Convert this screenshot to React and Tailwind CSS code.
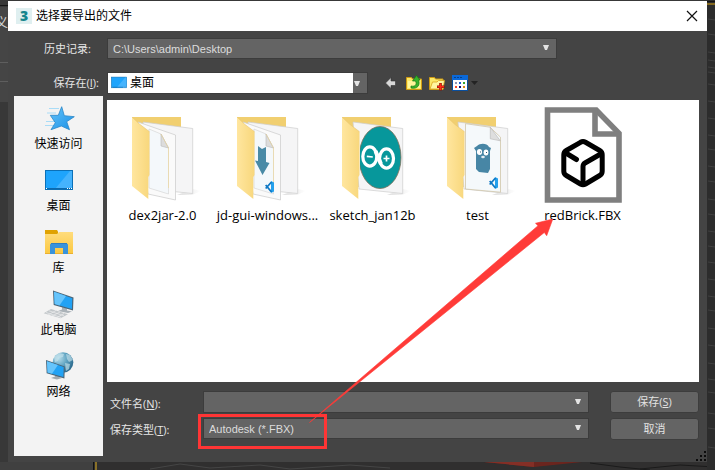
import React from "react";

const FONT = "font-['Open_Sans','Noto_Sans_CJK_SC',sans-serif]";

function Caret({ className = "" }) {
  return (
    <svg viewBox="0 0 6 5" className={"pointer-events-none h-[5px] w-1.5 " + className} aria-hidden="true">
      <path d="M0 0h6L4 5H2z" fill="#e4e4e4" />
    </svg>
  );
}

function Backdrop() {
  const marks = [19, 34, 52, 60, 67, 72, 84, 101, 118, 135, 149, 166, 181, 199, 214, 231, 246, 262, 279, 296, 310, 328, 345, 363, 379, 392, 413, 428, 447];
  return (
    <svg className="absolute inset-0 h-full w-full" viewBox="0 0 715 470" preserveAspectRatio="none" aria-hidden="true">
      <rect width="715" height="470" fill="#383838" />
      <rect y="7" width="8" height="95" fill="#454545" />
      <path d="M0 62.500h8M0 81.500h8" stroke="#5e5e5e" />
      <path d="M0 5.500h8" stroke="#161616" />
      <text x="-5" y="27" fontSize="13" fill="#d5d5d5" fontFamily="Noto Sans CJK SC">义</text>
      <rect y="462" width="93" height="8" fill="#404040" />
      <rect x="93" y="462" width="622" height="8" fill="#302f2f" />
      <path d="M93.500 462v8" stroke="#111" />
      <path d="M96 462v8" stroke="#8a7128" strokeWidth="2" />
      <path d="M150 469l30-5 30 4 50-3 30 4 60-4 40 3" stroke="#454545" fill="none" />
      <path d="M590 463l30 4 30 3M640 469l40-4 35 2" stroke="#1b1b1b" fill="none" />
      <path d="M484 462h98l-48 5z" fill="#6b251e" />
      <path d="M484 462h50v5z" fill="#842f26" />
      <rect x="707" width="8" height="470" fill="#2c2c2c" />
      <path d="M707 1.500h8" stroke="#111" />
      <path d="M707 4h8" stroke="#83681f" strokeWidth="2" />
      {marks.map((y) => (
        <path key={y} d={`M708 ${y}l7 1`} stroke="#414141" />
      ))}
    </svg>
  );
}

function StarIcon() {
  return (
    <svg viewBox="0 0 32 32" className="size-8" aria-hidden="true">
      <defs>
        <linearGradient id="star" x1="0" y1="0" x2="1" y2="1">
          <stop offset="0" stopColor="#62c3fa" />
          <stop offset="1" stopColor="#1b90e6" />
        </linearGradient>
      </defs>
      <path d="M6 5.500h10M4 10h9M3 18.500h9M2 22.500h8" stroke="#a9dcf7" strokeWidth="1" />
      <path d="M18.700 3.700l2.600 9 10 1-7.600 5 2.800 8-8.200-3.700L8 26.700l4.300-7-5-7.400h8z" fill="url(#star)" stroke="#2a86c8" strokeWidth=".8" strokeLinejoin="round" />
    </svg>
  );
}

function DesktopIcon({ className = "size-8" }) {
  return (
    <svg viewBox="0 0 32 32" className={className} aria-hidden="true">
      <rect x="2.500" y="5.500" width="27" height="19" fill="#1ea4fc" stroke="#0b70b7" />
      <path d="M12 24L27 6h2v18z" fill="#45b3fd" />
      <path d="M3 23.500h26" stroke="#0c69ad" />
      <path d="M3 23.500h1M24 23.500h1M26 23.500h1M28 23.500h1" stroke="#fff" />
    </svg>
  );
}

function LibraryIcon() {
  return (
    <svg viewBox="0 0 32 32" className="size-8" aria-hidden="true">
      <defs>
        <linearGradient id="lib" x1="0" y1="0" x2="0" y2="1">
          <stop offset="0" stopColor="#ffdc7c" />
          <stop offset="1" stopColor="#fbc83f" />
        </linearGradient>
      </defs>
      <path d="M2 3h12l1 1.500V9H2z" fill="#e0a200" />
      <path d="M2 7h12l2-2h14v22H2z" fill="url(#lib)" />
      <path d="M2 26.500h28" stroke="#eab030" />
      <path d="M7 17.500L8.500 16h15l1.500 1.500V27h-5v-6h-8v6H7z" fill="#3993db" />
      <path d="M8 16.500h16" stroke="#2e7fc1" />
    </svg>
  );
}

function Screen() {
  return (
    <>
      <path d="M0 0l20.500 7-.5 13L.7 14.500z" fill="#4b6577" />
      <path d="M1 1.300l18.300 6.400-.4 10.800-17.200-4.900z" fill="#22a2f4" />
      <path d="M1 1.300l12 4.200-6.500 9.500-4.800-1.400z" fill="#66c4fb" />
    </>
  );
}

function ComputerIcon() {
  return (
    <svg viewBox="0 0 32 32" className="size-8" aria-hidden="true">
      <path d="M19 18l5 1.500v2l5 1-4 1.500-10-2 4-1.500z" fill="#aab2b8" />
      <g transform="translate(10 1.500)"><Screen /></g>
      <path d="M.7 24.300L8 20l17 5.300-7.500 4z" fill="#c2c7ca" />
      <path d="M3 23.500l15 5M6 21.800l15 5M5 26l8-4.500M9 27l8-4M14 28.500l7-4" stroke="#f3f3f3" strokeWidth=".6" />
    </svg>
  );
}

function NetworkIcon() {
  return (
    <svg viewBox="0 0 32 32" className="size-8" aria-hidden="true">
      <defs>
        <radialGradient id="globe" cx=".3" cy=".3" r=".8">
          <stop offset="0" stopColor="#b5dcea" />
          <stop offset=".5" stopColor="#5fa3c1" />
          <stop offset="1" stopColor="#246286" />
        </radialGradient>
      </defs>
      <circle cx="20" cy="11.500" r="10.300" fill="url(#globe)" />
      <path d="M11 6l5-4 5 1-1 3-4 1-1 3-3 1zM23 3l4 1 3 5-4 2-2-3zM22 12l5 1-1 5-3 2z" fill="#c6e3ed" opacity=".65" />
      <path d="M12 23l4 1v2l3 1-5 1.500-6-1.500 4-1.500z" fill="#a1aab0" />
      <g transform="translate(3 9) scale(.92)"><Screen /></g>
    </svg>
  );
}

function CodeBadge({ x, y }) {
  return (
    <g transform={`translate(${x} ${y})`}>
      <path d="M6 0l3 1.500v9L6 12z" fill="#25a0ec" />
      <path d="M6.500 1L.7 7.500M6.500 11L.7 4" stroke="#0e78c5" strokeWidth="1.800" />
    </g>
  );
}

function FolderIcon({ kind }) {
  const sheet = kind === "arduino" || kind === "go";
  const id = "folder-" + kind;
  return (
    <svg viewBox="0 0 96 96" className="size-24" aria-hidden="true">
      <defs>
        <linearGradient id={id} x1="0" y1="0" x2="1" y2="0">
          <stop offset="0" stopColor="#ffe69f" />
          <stop offset="1" stopColor="#f8d77c" />
        </linearGradient>
        <linearGradient id={id + "s"} x1="0" y1="0" x2="1" y2="0">
          <stop offset="0" stopColor="#c8c8c8" />
          <stop offset="1" stopColor="#fff" />
        </linearGradient>
        <clipPath id={id + "c"}><path d="M35 10h50v80H35z" /></clipPath>
      </defs>
      <path d="M62 88l16-6 8 2-9 4z" fill={`url(#${id}s)`} opacity=".6" />
      <path d="M17 10h49v70H30z" fill="#f1cf70" />
      <path d="M28 15l49.700 6.500v65L34 82z" fill="#f5f5f6" stroke="#cdcdcd" strokeWidth=".7" />
      {!sheet && (
        <>
          <path d="M23 15l37.500 13v65L33 87z" fill="#fafafa" stroke="#cfcfcf" strokeWidth=".8" />
          <path d="M34 22l12 5 7.500 14v46L34 81z" fill="#f4f8fb" stroke="#d2d2d2" strokeWidth=".6" />
          <path d="M46 27l7.500 14-7.500-2z" fill="#dcdcdc" stroke="#bbb" strokeWidth=".6" />
          <path d="M46 27l7.500 14v40" fill="none" stroke="#efd795" strokeWidth=".6" />
        </>
      )}
      {kind === "arduino" && (
        <g clipPath={`url(#${id}c)`}>
          <ellipse cx="55" cy="50.500" rx="21" ry="31" fill="#07979b" stroke="#826f58" strokeWidth=".8" />
          <g fill="none" stroke="#fff" strokeWidth="3.200">
            <ellipse cx="44.800" cy="49.500" rx="7" ry="9.600" />
            <ellipse cx="61.500" cy="51.500" rx="7" ry="9.600" />
          </g>
          <path d="M50.500 44l5.500 13" stroke="#fff" strokeWidth="4" />
          <path d="M41.800 49.300l6 .7M58.500 51.500h6M61.500 48.500v6" stroke="#fff" strokeWidth="1.700" />
        </g>
      )}
      {kind === "go" && (
        <>
          <path d="M35.500 16.700l24.500 3.500 10.500 10v55L35.500 82z" fill="#f5f9fb" stroke="#cbbf9d" strokeWidth=".7" />
          <path d="M60.300 20.300l10 13.500-10-2z" fill="#dedede" stroke="#b6b6b6" strokeWidth=".6" />
          <path d="M47 39c3-3 10-3 12 1l2 1-1 3v18l-2 4-9-1-3-3V44l-2-3z" fill="#4786a5" />
          <ellipse cx="49.500" cy="45" rx="2.600" ry="3" fill="#fff" />
          <ellipse cx="56" cy="45.500" rx="2.400" ry="3" fill="#fff" />
          <ellipse cx="53" cy="50" rx="1.800" ry="1.300" fill="#e4edf1" />
          <path d="M50 45h1M56 45.500h1" stroke="#27566e" />
          <CodeBadge x="59" y="70" />
        </>
      )}
      {kind === "download" && (
        <>
          <path d="M38 39l4 3 4-2v15l3.500 1L42.500 68 35 53.500l3 .5z" fill="#498aa6" />
          <CodeBadge x="45" y="74" />
        </>
      )}
      <path d="M17 10l8 7.500 9.500 7.200V68l-1.200 2v22L17 79z" fill={`url(#${id})`} />
      <path d="M17 10l8 7.500 9.500 7.200" fill="none" stroke="#e9c46b" strokeWidth=".6" />
    </svg>
  );
}

function ModelFileIcon() {
  return (
    <svg viewBox="0 0 96 96" className="size-24" aria-hidden="true">
      <g fill="none" stroke="#7f7f7f" strokeWidth="5.600">
        <path d="M12.500 3h48.700L84 26.400V93H12.500z" />
        <path d="M60 3v24h24" />
      </g>
      <g fill="none" stroke="#000" strokeWidth="5" strokeLinecap="round" strokeLinejoin="round">
        <path d="M45.500 35.300q2.500-1.400 5 0l14.200 8.200q2.500 1.500 2.500 4.300v16.500q0 2.800-2.500 4.200L50.500 77q-2.500 1.400-5 0l-14.200-8.500q-2.500-1.400-2.500-4.200V47.800q0-2.800 2.500-4.300z" />
        <path d="M30 45.500L41.500 52.500M66.500 46.500L50 56q-2 1.200-2 3.500v18" />
      </g>
    </svg>
  );
}

const places = [
  { name: "快速访问", icon: <StarIcon /> },
  { name: "桌面", icon: <DesktopIcon /> },
  { name: "库", icon: <LibraryIcon /> },
  { name: "此电脑", icon: <ComputerIcon /> },
  { name: "网络", icon: <NetworkIcon /> },
];

const files = [
  { name: "dex2jar-2.0", icon: <FolderIcon kind="plain" /> },
  { name: "jd-gui-windows...", icon: <FolderIcon kind="download" /> },
  { name: "sketch_jan12b", icon: <FolderIcon kind="arduino" /> },
  { name: "test", icon: <FolderIcon kind="go" /> },
  { name: "redBrick.FBX", icon: <ModelFileIcon /> },
];

function Toolbar() {
  return (
    <div className="ml-[15px] flex items-center gap-[7px]">
      <button type="button" aria-label="后退" className="size-4">
        <svg viewBox="0 0 16 16" className="size-4">
          <path d="M2.500 8L8 2.500V6h4.500v4.500H8v3z" fill="#d8d8d8" stroke="#333" strokeWidth=".6" />
        </svg>
      </button>
      <button type="button" aria-label="向上一级" className="size-4">
        <svg viewBox="0 0 16 16" className="size-4">
          <path d="M.5 2.500h5l1 1.500h9v10.500H.5z" fill="#fce968" stroke="#cf9a12" />
          <path d="M2 6h12v7H2z" fill="#fff69b" />
          <path d="M5 11c5 1 6-2 4.500-5H6.500l4-5.500L14 5h-1.500c2 5-1 9.500-7.500 8z" fill="#38b42b" stroke="#157916" strokeWidth=".7" />
        </svg>
      </button>
      <button type="button" aria-label="新建文件夹" className="size-4">
        <svg viewBox="0 0 16 16" className="size-4">
          <path d="M.5 2.500h5l1 1.500h7.500v10.500H.5z" fill="#fce968" stroke="#cf9a12" />
          <path d="M1 14l2.500-7H8l1.500-1.500H15.500L14 14z" fill="#fff6a0" stroke="#d9a41c" strokeWidth=".8" />
          <path d="M11.500 8v7.500M8 11.800h7.500" stroke="#8e1409" strokeWidth="2.600" />
          <path d="M11.500 8.500v6.500M8.500 11.800h6.500" stroke="#ff2b12" strokeWidth="1.500" />
        </svg>
      </button>
      <button type="button" aria-label="查看菜单" className="flex h-4 items-center gap-[3px]">
        <svg viewBox="0 0 16 16" className="size-4">
          <rect x=".5" y=".5" width="15" height="15" fill="#fff" stroke="#0a4f9e" />
          <rect width="16" height="5" fill="#0a68d8" />
          <path d="M2 2.500h2M5 2.500h2M8 2.500h2" stroke="#073f8b" />
          <path d="M3 7h2v2H3z" fill="#9295b4" />
          <path d="M7 7h2v2H7z" fill="#1a5fd1" />
          <path d="M11 7h2v2h-2z" fill="#38a829" />
          <path d="M3 11h2v2H3z" fill="#ff4923" />
          <path d="M7 11h2v2H7z" fill="#0c0c72" />
          <path d="M11 11h2v2h-2z" fill="#da8511" />
        </svg>
        <svg viewBox="0 0 7 4" className="h-1 w-[7px]"><path d="M0 0h7L3.500 4z" fill="#232323" /></svg>
      </button>
    </div>
  );
}

const field = "block h-full w-full appearance-none rounded-none border border-[#3c3c3c] bg-[#646464] px-[5px] font-['Liberation_Sans','Noto_Sans_CJK_SC',sans-serif] text-[11px] leading-4 text-[#dcdcdc] outline-none";
const action = "h-[22px] rounded-[3px] border border-[#3d3d3d] bg-[#646464] text-[11px] leading-4 text-[#e2e2e2]";

export default function App() {
  return (
    <div className={"relative flex min-h-screen flex-col overflow-hidden px-2 pt-px pb-2 " + FONT}>
      <Backdrop />
      <main className="relative flex flex-1 flex-col bg-[#444444]">
        <header className="flex h-[30px] items-center bg-white pr-[9px] pl-2">
          <span className="flex size-4 items-center justify-center bg-[#dfeff0] text-sm leading-4 font-black text-[#16858c]">3</span>
          <h1 className="ml-1 flex-1 text-xs leading-4 text-black">选择要导出的文件</h1>
          <button type="button" aria-label="关闭" className="size-3">
            <svg viewBox="0 0 12 12" className="size-3"><path d="M1 1l10 10M11 1L1 11" stroke="#111" strokeWidth="1.200" /></svg>
          </button>
        </header>

        <div className="mt-[7px] flex h-[21px] items-center pr-[150px]">
          <label htmlFor="history" className="w-[99px] pr-4 text-right text-[11px] leading-4 text-[#e6e6e6]">历史记录:</label>
          <div className="relative h-full flex-1">
            <select id="history" className={field}><option>C:\Users\admin\Desktop</option></select>
            <Caret className="absolute top-[7px] right-2" />
          </div>
        </div>

        <div className="mt-[13px] flex h-[22px] items-center">
          <label htmlFor="location" className="w-[99px] pr-2 text-right text-[11px] leading-4 text-[#e6e6e6]">保存在(<u>I</u>):</label>
          <div className="relative h-full w-[261px]">
            <select id="location" className="block h-full w-full appearance-none rounded-none border border-[#3c3c3c] bg-white pl-[22px] text-xs leading-4 text-black outline-none">
              <option>桌面</option>
            </select>
            <DesktopIcon className="pointer-events-none absolute top-0.5 left-[3px] size-[18px]" />
            <span className="pointer-events-none absolute inset-y-px right-px flex w-3.5 items-center justify-center bg-[#646464] pr-1.5"><Caret className="shrink-0" /></span>
          </div>
          <Toolbar />
        </div>

        <div className="mt-px flex flex-1 gap-1 pt-px pr-2 pb-1.5 pl-1.5">
          <nav className="w-[89px] shrink-0 bg-[#f3f3f3]">
            {places.map((p) => (
              <button key={p.name} type="button" className="flex h-[62px] w-full flex-col items-center gap-px pt-[7px] text-xs leading-4 text-black">
                {p.icon}
                {p.name}
              </button>
            ))}
          </nav>

          <div className="flex min-w-0 flex-1 flex-col pt-1">
            <section className="grid min-h-[200px] flex-1 grid-cols-[repeat(auto-fill,105px)] content-start bg-white pt-[7px] pl-[3px]">
              {files.map((f) => (
                <button key={f.name} type="button" className="flex flex-col items-center gap-1 text-[13px] leading-4 whitespace-nowrap text-black">
                  {f.icon}
                  {f.name}
                </button>
              ))}
            </section>

            <div className="mt-[9px] flex h-[65px] gap-[21px]">
              <div className="flex flex-1 flex-col gap-[5px]">
                <div className="flex h-[22px] items-center">
                  <label htmlFor="filename" className="w-24 pt-1 pl-[3px] text-[11px] leading-4 text-[#e6e6e6]">文件名(<u>N</u>):</label>
                  <div className="relative h-full flex-1">
                    <input id="filename" type="text" className={field} />
                    <Caret className="absolute top-2 right-2" />
                  </div>
                </div>
                <div className="flex h-[21px] items-center">
                  <label htmlFor="filetype" className="w-24 pt-0.5 pl-[3px] text-[11px] leading-4 text-[#e6e6e6]">保存类型(<u>T</u>):</label>
                  <div className="relative h-full flex-1">
                    <select id="filetype" className={field}><option>Autodesk (*.FBX)</option></select>
                    <Caret className="absolute top-[7px] right-2" />
                  </div>
                </div>
              </div>
              <div className="flex w-[89px] flex-col gap-[5px]">
                <button type="button" className={action}>保存(<u>S</u>)</button>
                <button type="button" className={action}>取消</button>
              </div>
            </div>
          </div>
        </div>
        <svg viewBox="0 0 10 10" className="absolute right-px bottom-px size-2.5" aria-hidden="true">
          <path d="M8 0h2v2H8zM8 4h2v2H8zM4 4h2v2H4zM8 8h2v2H8zM4 8h2v2H4zM0 8h2v2H0z" fill="#0c0c0c" />
        </svg>
      </main>

      <svg className="pointer-events-none absolute inset-0 h-full w-full" viewBox="0 0 715 470" aria-hidden="true">
        <rect x="199.500" y="415.500" width="126" height="32" fill="none" stroke="#ff3535" strokeWidth="3" />
        <path d="M309.500 422.500L538 225.700 535.500 223.300 552.800 219 546.700 235.700 544.300 232.500z" fill="#ff3b38" stroke="#ff3b38" strokeWidth=".6" />
      </svg>
    </div>
  );
}
